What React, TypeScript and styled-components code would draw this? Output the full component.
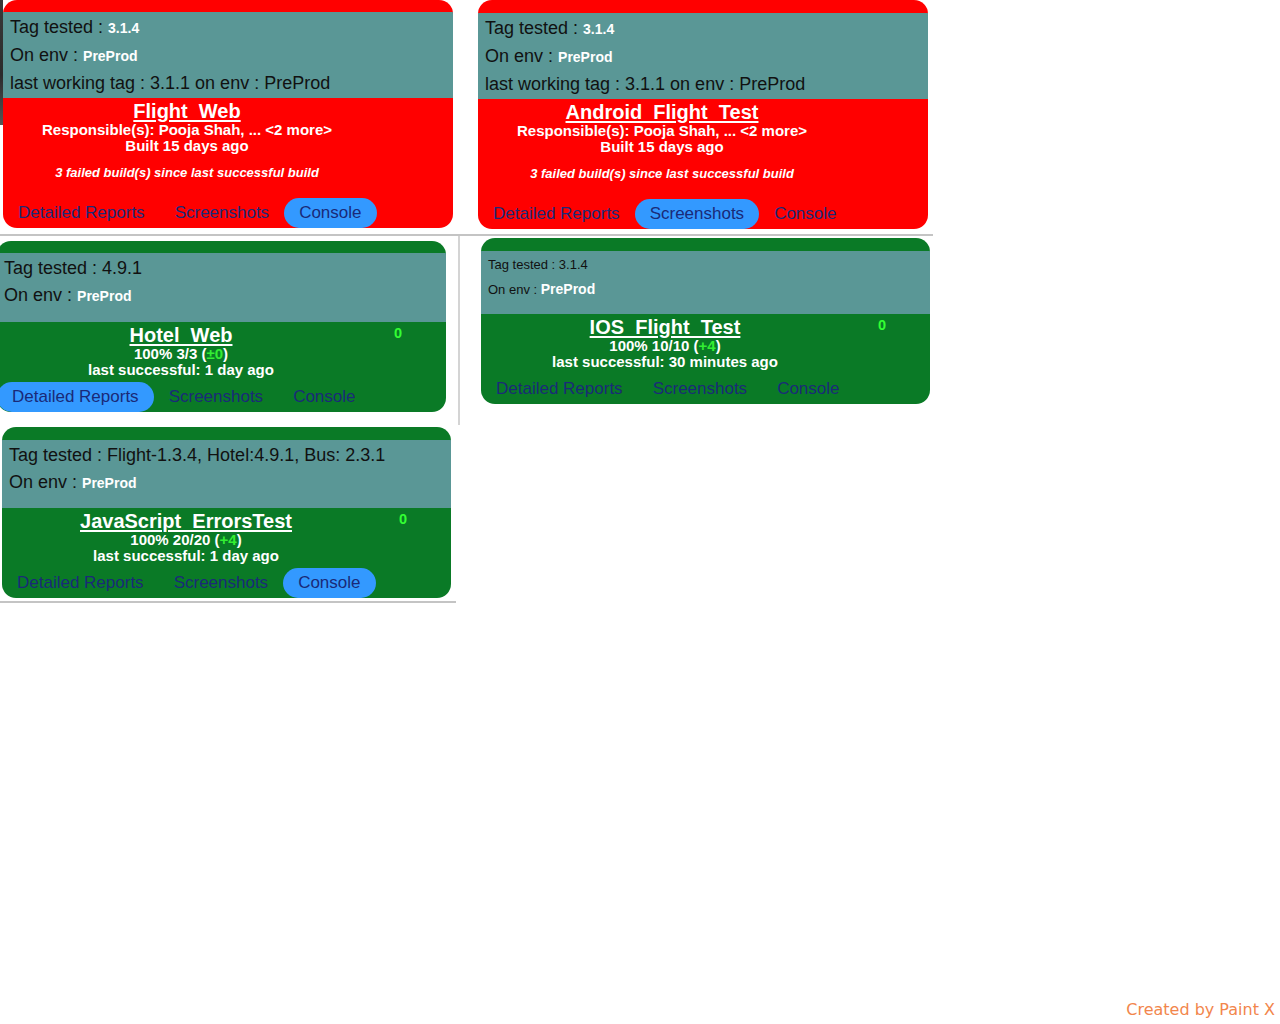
import React from "react";
import styled, { createGlobalStyle } from "styled-components";

const Global = createGlobalStyle`
  html, body { margin: 0; padding: 0; background: #ffffff; }
  body { font-family: "Liberation Sans", Arial, sans-serif; }
`;

const Page = styled.div`
  min-height: 1024px;
  display: flex;
  flex-direction: column;
  box-sizing: border-box;
`;

const TopRow = styled.div`
  display: flex;
  width: 933px;
  height: 236px;
  box-sizing: border-box;
  border-bottom: 2px solid #c4c4c4;
`;

const TopLeftCell = styled.div`
  width: 460px;
  display: flex;
  align-items: flex-start;
`;

const Strip = styled.div`
  width: 3px;
  height: 125px;
  background: linear-gradient(#3a3a3a, #2b2b2b 60%, #555 100%);
`;

const TopRightCell = styled.div`
  flex: 1;
  padding-left: 18px;
`;

const LowerArea = styled.div`
  display: flex;
  align-items: flex-start;
`;

const LeftColumn = styled.div`
  width: 460px;
  display: flex;
  flex-direction: column;
`;

const HotelCell = styled.div`
  height: 189px;
  box-sizing: border-box;
  padding-top: 5px;
  border-right: 2px solid #d4d4d4;
  overflow: hidden;
`;

const ScriptCell = styled.div`
  width: 456px;
  height: 178px;
  box-sizing: border-box;
  padding: 2px 0 0 2px;
  border-bottom: 2px solid #c4c4c4;
`;

const RightColumn = styled.div`
  padding: 2px 0 0 21px;
`;

const Card = styled.div<{ $tone: "red" | "green"; $band: number; $shift?: number; $width?: number }>`
  width: ${(p) => p.$width ?? 450}px;
  box-sizing: border-box;
  border-radius: 14px;
  overflow: hidden;
  background: ${(p) => (p.$tone === "red" ? "#ff0000" : "#0a7a26")};
  padding-top: ${(p) => p.$band}px;
  margin-left: ${(p) => p.$shift ?? 0}px;
`;

const Info = styled.div<{ $height: number }>`
  background: #5a9796;
  height: ${(p) => p.$height}px;
  box-sizing: border-box;
  padding: 2px 7px 0;
`;

const InfoLine = styled.div<{ $small?: boolean }>`
  font-size: ${(p) => (p.$small ? "13px" : "18px")};
  line-height: ${(p) => (p.$small ? "24px" : "27px")};
  color: #111111;
  white-space: nowrap;
`;

const Value = styled.span`
  font-size: 14px;
  font-weight: bold;
  color: #ffffff;
`;

const Body = styled.div`
  padding-top: 2px;
  display: flex;
  flex-direction: column;
`;

const Summary = styled.div`
  display: grid;
  grid-template-columns: 368px 1fr;
`;

const Center = styled.div`
  text-align: center;
  color: #ffffff;
  font-weight: bold;
`;

const Title = styled.a`
  display: block;
  font-size: 20px;
  line-height: 22px;
  color: #ffffff;
  text-decoration: underline;
  text-underline-offset: 2px;
`;

const Sub = styled.div`
  font-size: 15px;
  line-height: 16px;
  white-space: nowrap;
`;

const Delta = styled.span`
  color: #33ee33;
`;

const Note = styled.div`
  font-size: 13px;
  line-height: 16px;
  font-style: italic;
  margin-top: 11px;
  white-space: nowrap;
`;

const Score = styled.div`
  color: #33ff33;
  font-weight: bold;
  font-size: 14.5px;
  line-height: 18px;
  padding-left: 29px;
`;

const Tabs = styled.div<{ $gap: number }>`
  display: flex;
  margin-top: ${(p) => p.$gap}px;
  height: 30px;
`;

const Tab = styled.span<{ $active?: boolean }>`
  padding: 0 15px;
  height: 30px;
  line-height: 30px;
  border-radius: 15px;
  font-size: 17px;
  color: #1a2a78;
  white-space: nowrap;
  background: ${(p) => (p.$active ? "#3399ff" : "transparent")};
`;

const Footer = styled.div`
  margin-top: auto;
  text-align: right;
  padding: 0 5px 5px 0;
  font-family: "DejaVu Sans", Verdana, sans-serif;
  font-size: 16px;
  line-height: 19px;
  color: #f2864c;
`;

type TabName = "Detailed Reports" | "Screenshots" | "Console";
const TAB_NAMES: TabName[] = ["Detailed Reports", "Screenshots", "Console"];

function TabRow({ active, gap }: { active: TabName | null; gap: number }) {
  return (
    <Tabs $gap={gap}>
      {TAB_NAMES.map((t) => (
        <Tab key={t} $active={t === active}>
          {t}
        </Tab>
      ))}
    </Tabs>
  );
}

function FailedCard({ name, active, band }: { name: string; active: TabName; band: number }) {
  return (
    <Card $tone="red" $band={band}>
      <Info $height={86}>
        <InfoLine>
          Tag tested : <Value>3.1.4</Value>
        </InfoLine>
        <InfoLine>
          On env : <Value>PreProd</Value>
        </InfoLine>
        <InfoLine>last working tag : 3.1.1 on env : PreProd</InfoLine>
      </Info>
      <Body>
        <Summary>
          <Center>
            <Title>{name}</Title>
            <Sub>Responsible(s): Pooja Shah, ... &lt;2 more&gt;</Sub>
            <Sub>Built 15 days ago</Sub>
            <Note>3 failed build(s) since last successful build</Note>
          </Center>
        </Summary>
        <TabRow active={active} gap={17} />
      </Body>
    </Card>
  );
}

function PassedCard({
  name,
  result,
  delta,
  last,
  active,
  band,
  infoHeight,
  info,
  shift,
}: {
  name: string;
  result: string;
  delta: string;
  last: string;
  active: TabName | null;
  band: number;
  infoHeight: number;
  info: React.ReactNode;
  shift?: number;
}) {
  return (
    <Card $tone="green" $band={band} $shift={shift} $width={449}>
      <Info $height={infoHeight}>{info}</Info>
      <Body>
        <Summary>
          <Center>
            <Title>{name}</Title>
            <Sub>
              {result} (<Delta>{delta}</Delta>)
            </Sub>
            <Sub>last successful: {last}</Sub>
          </Center>
          <Score>0</Score>
        </Summary>
        <TabRow active={active} gap={4} />
      </Body>
    </Card>
  );
}

export default function App() {
  return (
    <Page>
      <Global />
      <TopRow>
        <TopLeftCell>
          <Strip />
          <FailedCard name="Flight_Web" active="Console" band={12} />
        </TopLeftCell>
        <TopRightCell>
          <FailedCard name="Android_Flight_Test" active="Screenshots" band={13} />
        </TopRightCell>
      </TopRow>
      <LowerArea>
        <LeftColumn>
          <HotelCell>
            <PassedCard
              name="Hotel_Web"
              result="100% 3/3"
              delta="±0"
              last="1 day ago"
              active="Detailed Reports"
              band={12}
              infoHeight={69}
              shift={-3}
              info={
                <>
                  <InfoLine>Tag tested : 4.9.1</InfoLine>
                  <InfoLine>
                    On env : <Value>PreProd</Value>
                  </InfoLine>
                </>
              }
            />
          </HotelCell>
          <ScriptCell>
            <PassedCard
              name="JavaScript_ErrorsTest"
              result="100% 20/20"
              delta="+4"
              last="1 day ago"
              active="Console"
              band={13}
              infoHeight={68}
              info={
                <>
                  <InfoLine>Tag tested : Flight-1.3.4, Hotel:4.9.1, Bus: 2.3.1</InfoLine>
                  <InfoLine>
                    On env : <Value>PreProd</Value>
                  </InfoLine>
                </>
              }
            />
          </ScriptCell>
        </LeftColumn>
        <RightColumn>
          <PassedCard
            name="IOS_Flight_Test"
            result="100% 10/10"
            delta="+4"
            last="30 minutes ago"
            active={null}
            band={13}
            infoHeight={63}
            info={
              <>
                <InfoLine $small>Tag tested : 3.1.4</InfoLine>
                <InfoLine $small>
                  On env : <Value>PreProd</Value>
                </InfoLine>
              </>
            }
          />
        </RightColumn>
      </LowerArea>
      <Footer>Created by Paint X</Footer>
    </Page>
  );
}
